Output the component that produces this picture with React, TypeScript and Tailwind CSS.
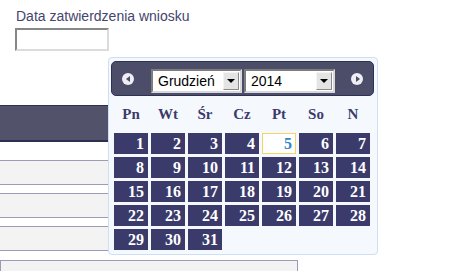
const weekDays = ["Pn", "Wt", "Śr", "Cz", "Pt", "So", "N"];
const days = Array.from({ length: 31 }, (_, i) => i + 1);
const today = 5;

function FakeSelect({ value, width }: { value: string; width: string }) {
  return (
    <div
      className={`${width} relative flex h-[24px] items-center border-2 border-t-[#7d7d7d] border-l-[#7d7d7d] border-b-[#d8d8d8] border-r-[#d8d8d8] bg-white pl-[5px] text-[14px] leading-none text-black`}
    >
      {value}
      <div className="absolute top-[1px] right-[1px] bottom-[1px] flex w-[16px] items-center justify-center border border-t-[#f4f4f4] border-l-[#f4f4f4] border-b-[#8a8a8a] border-r-[#8a8a8a] bg-[#e4e4e4]">
        <div className="h-0 w-0 border-x-[4px] border-t-[4px] border-x-transparent border-t-black" />
      </div>
    </div>
  );
}

function NavButton({ dir }: { dir: "prev" | "next" }) {
  return (
    <div className="flex h-[12px] w-[12px] items-center justify-center rounded-full bg-[#eeeef4]">
      {dir === "prev" ? (
        <div className="mr-[1px] h-0 w-0 border-y-[3px] border-r-[4px] border-y-transparent border-r-[#4c4d69]" />
      ) : (
        <div className="ml-[1px] h-0 w-0 border-y-[3px] border-l-[4px] border-y-transparent border-l-[#4c4d69]" />
      )}
    </div>
  );
}

function Row() {
  return <div className="h-[25px] w-[298px] border-y border-[#9e9bb6] bg-[#f3f3f3]" />;
}

export default function App() {
  return (
    <div className="relative h-[271px] w-[450px] overflow-hidden bg-white font-['Liberation_Sans',Arial,sans-serif]">
      <div className="pt-[8px] pl-[16px] text-[14px] leading-[17px] text-[#45446f]">
        Data zatwierdzenia wniosku
      </div>
      <div className="mt-[3px] ml-[15px] h-[23px] w-[94px] border-2 border-t-[#878787] border-l-[#878787] border-b-[#dcdcdc] border-r-[#dcdcdc] bg-white" />

      <div className="mt-[54px] h-[37px] w-[298px] border-t border-b-2 border-[#2e2e52] bg-[#52526b]" />
      <div className="h-[18px]" />
      <Row />
      <div className="h-[8px]" />
      <Row />
      <div className="h-[8px]" />
      <Row />
      <div className="h-[9px]" />
      <div className="h-[20px] w-[298px] border border-[#9e9bb6] bg-[#f3f3f3]" />

      <div className="absolute top-[57px] left-[108px] h-[198px] w-[270px] rounded-[4px] border border-[#cbdff5] bg-[#f5f9fe] pt-[3px] pl-[2px]">
        <div className="flex h-[35px] w-[263px] items-center rounded-[5px] border border-[#2f3057] bg-[#4c4d69] pl-[10px]">
          <NavButton dir="prev" />
          <div className="mt-[5px] ml-[17px] flex gap-[2px]">
            <FakeSelect value="Grudzień" width="w-[91px]" />
            <FakeSelect value="2014" width="w-[91px]" />
          </div>
          <div className="ml-[16px]">
            <NavButton dir="next" />
          </div>
        </div>

        <div className="ml-[3px] grid grid-cols-[repeat(7,34px)] gap-x-[3px] font-['Liberation_Serif',serif] font-bold">
          {weekDays.map((d) => (
            <div
              key={d}
              className="flex h-[37px] items-center justify-center text-[15px] text-[#3b3b6b]"
            >
              {d}
            </div>
          ))}
        </div>

        <div className="ml-[3px] grid grid-cols-[repeat(7,34px)] gap-[3px] font-['Liberation_Serif',serif] font-bold">
          {days.map((d) => (
            <div
              key={d}
              className={
                d === today
                  ? "flex h-[21px] items-center justify-end border border-[#f3d565] bg-white pr-[3px] text-[16px] text-[#2f86c3]"
                  : "flex h-[21px] items-center justify-end bg-[#3b3b6b] pr-[4px] text-[16px] text-white"
              }
            >
              {d}
            </div>
          ))}
        </div>
      </div>
    </div>
  );
}
